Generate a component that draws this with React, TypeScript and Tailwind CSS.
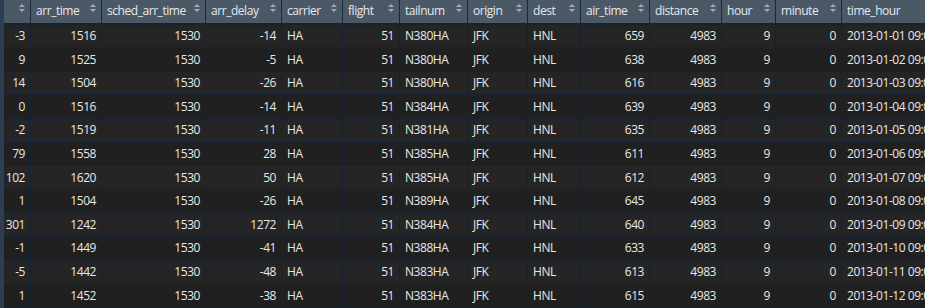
import React from "react";

const cols: { name: string; w: string; align: "l" | "r" }[] = [
  { name: "", w: "w-[27px]", align: "r" },
  { name: "arr_time", w: "w-[71px]", align: "r" },
  { name: "sched_arr_time", w: "w-[104px]", align: "r" },
  { name: "arr_delay", w: "w-[76px]", align: "r" },
  { name: "carrier", w: "w-[61px]", align: "l" },
  { name: "flight", w: "w-[57px]", align: "r" },
  { name: "tailnum", w: "w-[68px]", align: "l" },
  { name: "origin", w: "w-[60px]", align: "l" },
  { name: "dest", w: "w-[53px]", align: "l" },
  { name: "air_time", w: "w-[69px]", align: "r" },
  { name: "distance", w: "w-[72px]", align: "r" },
  { name: "hour", w: "w-[54px]", align: "r" },
  { name: "minute", w: "w-[66px]", align: "r" },
  { name: "time_hour", w: "w-[130px]", align: "l" },
];

const raw: [string, string, string, string, string, string][] = [
  ["-3", "1516", "-14", "N380HA", "659", "01"],
  ["9", "1525", "-5", "N380HA", "638", "02"],
  ["14", "1504", "-26", "N380HA", "616", "03"],
  ["0", "1516", "-14", "N384HA", "639", "04"],
  ["-2", "1519", "-11", "N381HA", "635", "05"],
  ["79", "1558", "28", "N385HA", "611", "06"],
  ["102", "1620", "50", "N385HA", "612", "07"],
  ["1", "1504", "-26", "N389HA", "645", "08"],
  ["1301", "1242", "1272", "N384HA", "640", "09"],
  ["-1", "1449", "-41", "N388HA", "633", "10"],
  ["-5", "1442", "-48", "N383HA", "613", "11"],
  ["1", "1452", "-38", "N383HA", "615", "12"],
];

const rows = raw.map((r) => [
  r[0], r[1], "1530", r[2], "HA", "51", r[3], "JFK", "HNL", r[4], "4983", "9", "0", `2013-01-${r[5]} 09:00:00`,
]);

function SortIcon() {
  return (
    <svg width="6" height="8" viewBox="0 0 6 8" className="absolute right-[5px] top-[4px]">
      <polygon points="0,3 6,3 3,0" fill="#a3adb6" />
      <polygon points="0,5 6,5 3,8" fill="#a3adb6" />
    </svg>
  );
}

export default function App() {
  return (
    <div
      className="w-[925px] h-[308px] overflow-hidden bg-[#222222] flex text-[12px]"
      style={{ fontFamily: '"Open Sans", "Noto Sans", sans-serif' }}
    >
      <div className="w-[4px] shrink-0 bg-[#2c3f52]" />
      <div className="flex flex-col shrink-0">
        <div className="flex h-[25px] bg-[#4b5967] border-b-2 border-[#16222e]">
          {cols.map((c, i) => (
            <div
              key={i}
              className={`${c.w} shrink-0 relative border-r border-[#1a2836] flex items-center pl-[5px] text-[#e4e9ee] tracking-[-0.45px] whitespace-nowrap overflow-hidden`}
            >
              {c.name}
              {i !== cols.length - 1 && <SortIcon />}
            </div>
          ))}
        </div>
        {rows.map((r, ri) => (
          <div
            key={ri}
            className={`flex h-[24px] border-b border-[#142233] ${ri % 2 === 0 ? "bg-[#252525]" : "bg-[#202020]"}`}
          >
            {r.map((v, ci) => (
              <div
                key={ci}
                className={`${cols[ci].w} shrink-0 border-r border-[#142233] flex items-center overflow-hidden whitespace-nowrap text-[#e8e8e8] tracking-[-0.45px] ${
                  cols[ci].align === "r" ? "justify-end pr-[5px]" : "justify-start pl-[5px]"
                }`}
              >
                <span className="shrink-0">{v}</span>
              </div>
            ))}
          </div>
        ))}
      </div>
    </div>
  );
}
